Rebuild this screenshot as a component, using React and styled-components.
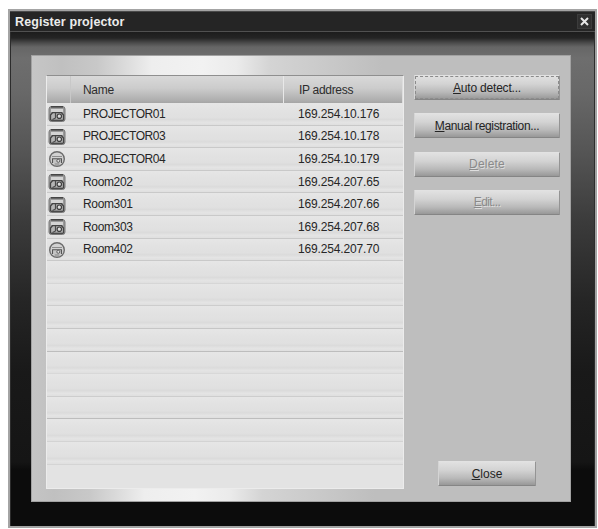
import React from 'react'
import styled, { createGlobalStyle } from 'styled-components'

const GlobalStyle = createGlobalStyle`
body {
  margin: 0;
  background: #ffffff;
  font-family: 'Liberation Sans', Arial, sans-serif;
  overflow: hidden;
}
* {
  box-sizing: border-box;
}
`

const Page = styled.div`
width: 598px;
height: 529px;
padding: 9px 0 0 8px;
`

const Window = styled.div`
width: 589px;
height: 519px;
border: 2px solid #a4a4a4;
display: flex;
flex-direction: column;
background: #0d0d0d;
`

const TitleBar = styled.div`
height: 21px;
flex: none;
display: flex;
align-items: center;
justify-content: space-between;
padding: 0 3px 0 5px;
background: #252525;
border-top: 1px solid #4a4a4a;
border-bottom: 1px solid #505050;
`

const Title = styled.h1`
margin: 0;
font-weight: 700;
font-size: 12.5px;
line-height: 18px;
letter-spacing: 0.1px;
color: #ececec;
white-space: nowrap;
`

const CloseIcon = styled.button`
width: 15px;
height: 15px;
padding: 0;
border: 1px solid #3c3c3c;
background: #303030;
display: flex;
align-items: center;
justify-content: center;
`

const Frame = styled.div`
flex: 1;
padding: 23px 23px 24px 20px;
border: solid #2c2c2c;
border-width: 0 1px 0 1px;
background: linear-gradient(180deg, #1c1c1c 0px, #242424 6px, #4c4c4c 11px, #666666 15px, #6e6e6e 26px, #686868 60px, #555555 120px, #3b3b3b 190px, #252525 270px, #191919 340px, #151515 430px, #0c0c0c 438px);
`

const Panel = styled.div`
height: 447px;
display: flex;
justify-content: space-between;
padding: 19px 10px 13px 14px;
border: 1px solid #a2a2a2;
background: linear-gradient(91deg, #c6c6c6 0px, #c0c0c0 30px, #c8c8c8 65px, #dadada 92px, #eeeeee 120px, #f2f2f2 170px, #ebebeb 205px, #d4d4d4 238px, #cbcbcb 285px, #bebebe 350px, #bebebe 100%);
`

const List = styled.div`
width: 358px;
height: 414px;
border: 1px solid #ececec;
border-top: 1px solid #8f8f8f;
background: #e3e3e3;
`

const HeaderRow = styled.div`
height: 27px;
display: grid;
grid-template-columns: 24px 213px 1fr;
background: linear-gradient(180deg, #d9d9d9 0%, #cccccc 45%, #aeaeae 90%, #a5a5a5 100%);
`

const HeaderCell = styled.div`
padding: 7px 0 0 ${props => props.$indent || 0}px;
border-right: 1px solid ${props => props.$line};
font-size: 12px;
line-height: 15px;
letter-spacing: ${props => props.$spacing || 0}px;
color: #2d2d2d;
white-space: nowrap;
`

const Row = styled.div`
height: 22.6px;
display: grid;
grid-template-columns: 24px 227px 1fr;
align-items: center;
border-bottom: 1px solid ${props => props.$line};
background: linear-gradient(180deg, #e6e6e6 0%, #e2e2e2 35%, #e0e0e0 65%, #dbdbdb 75%, #e4e4e4 88%, #dfdfdf 100%);
`

const Cell = styled.span`
padding-left: ${props => props.$indent || 0}px;
font-size: 12px;
line-height: 20px;
letter-spacing: ${props => props.$spacing}px;
color: #262626;
white-space: nowrap;
`

const DeviceIcon = styled.svg`
display: block;
width: 18px;
height: 18px;
margin: 1px 0 0 1px;
`

const Side = styled.div`
width: 146px;
display: flex;
flex-direction: column;
gap: 13.3px;
`

const Button = styled.button`
width: ${props => props.$width || 146}px;
height: 25px;
padding: 0;
flex: none;
font-family: inherit;
font-size: 12px;
line-height: 14px;
letter-spacing: ${props => props.$spacing || 0}px;
text-align: center;
white-space: nowrap;
color: ${props => (props.disabled ? '#8a8a8a' : '#242424')};
text-shadow: ${props => (props.disabled ? '1px 1px 0 #dedede' : 'none')};
border: 1px solid;
border-color: #e2e2e2 #949494 #858585 #d4d4d4;
border-radius: 1px;
background: linear-gradient(180deg, #e1e1e1 0%, #d3d3d3 35%, #b9b9b9 70%, #989898 100%);
outline: ${props => (props.$focused ? '1px dashed #8b8b8b' : 'none')};
outline-offset: -2px;
`

const CloseButton = styled(Button)`
margin: auto 0 2px 24px;
`

const projectors = [
  { name: 'PROJECTOR01', ip: '169.254.10.176', type: 'box' },
  { name: 'PROJECTOR03', ip: '169.254.10.178', type: 'box' },
  { name: 'PROJECTOR04', ip: '169.254.10.179', type: 'round' },
  { name: 'Room202', ip: '169.254.207.65', type: 'box' },
  { name: 'Room301', ip: '169.254.207.66', type: 'box' },
  { name: 'Room303', ip: '169.254.207.68', type: 'box' },
  { name: 'Room402', ip: '169.254.207.70', type: 'round' },
]

// separator shade of each unused row
const emptyRows = ['#d6d6d6', '#cdcdcd', '#c6c6c6', '#bdbdbd', '#d8d8d8', '#cdcdcd', '#bdbdbd', '#d3d3d3', '#d4d4d4']

const ProjectorIcon = ({ type }) => {
  if (type === 'round') {
    return (
      <DeviceIcon viewBox="0 0 18 18" fill="none">
        <circle cx="9" cy="9" r="7.3" fill="#d2d2d2" stroke="#6c6c6c" strokeWidth="1.4" />
        <path d="M4 6.5h10" stroke="#8c8c8c" strokeWidth="1" />
        <path d="M4.5 13V8.8h9V13" fill="#c4c4c4" stroke="#555555" strokeWidth="1.1" />
        <circle cx="10.3" cy="10.8" r="1.5" fill="#e2e2e2" stroke="#5c5c5c" />
        <path d="M6.5 14h5" stroke="#777777" />
      </DeviceIcon>
    )
  }
  return (
    <DeviceIcon viewBox="0 0 18 18" fill="none">
      <rect x="1" y="1.5" width="16" height="15" rx="2.5" fill="#9a9a9a" stroke="#7a7a7a" />
      <path d="M3 1.8h12" stroke="#454545" strokeWidth="1.6" />
      <path d="M3 4h12v3H3z" fill="#d4d4d4" />
      <path d="M2.5 15V10l2-2.3h9l2 2.3v5" fill="#b5b5b5" stroke="#444444" strokeWidth="1.3" />
      <circle cx="11.3" cy="11.2" r="2.2" fill="#dddddd" stroke="#3f3f3f" strokeWidth="1.2" />
      <path d="M7.5 8v5l-3 1.5" stroke="#4a4a4a" strokeWidth="1.2" />
      <path d="M2.5 15.3h13" stroke="#4b4b4b" strokeWidth="1.4" />
    </DeviceIcon>
  )
}

const App = () => {
  return (
    <Page>
      <GlobalStyle />
      <Window>
        <TitleBar>
          <Title>Register projector</Title>
          <CloseIcon aria-label="Close window">
            <svg width="9" height="9" viewBox="0 0 9 9">
              <path d="M1 1l7 7M8 1L1 8" stroke="#e6e6e6" strokeWidth="2" />
            </svg>
          </CloseIcon>
        </TitleBar>

        <Frame>
          <Panel>
            <List>
              <HeaderRow>
                <HeaderCell $line="#c8c8c8" />
                <HeaderCell $indent={12} $line="#e8e8e8" $spacing={-0.3}>Name</HeaderCell>
                <HeaderCell $indent={15} $line="#dddddd" $spacing={-0.3}>IP address</HeaderCell>
              </HeaderRow>
              {projectors.map(item => (
                <Row key={item.name} $line="#c9c9c9">
                  <ProjectorIcon type={item.type} />
                  <Cell $indent={12} $spacing={item.name.startsWith('Room') ? -0.35 : -0.45}>{item.name}</Cell>
                  <Cell $spacing={-0.15}>{item.ip}</Cell>
                </Row>
              ))}
              {emptyRows.map((line, i) => (
                <Row key={i} $line={line} />
              ))}
            </List>

            <Side>
              <Button $focused $spacing={-0.2}><u>A</u>uto detect...</Button>
              <Button $spacing={-0.35}><u>M</u>anual registration...</Button>
              <Button disabled $spacing={0.2}><u>D</u>elete</Button>
              <Button disabled $spacing={-0.6}><u>E</u>dit...</Button>
              <CloseButton $width={98}><u>C</u>lose</CloseButton>
            </Side>
          </Panel>
        </Frame>
      </Window>
    </Page>
  )
}

export default App
